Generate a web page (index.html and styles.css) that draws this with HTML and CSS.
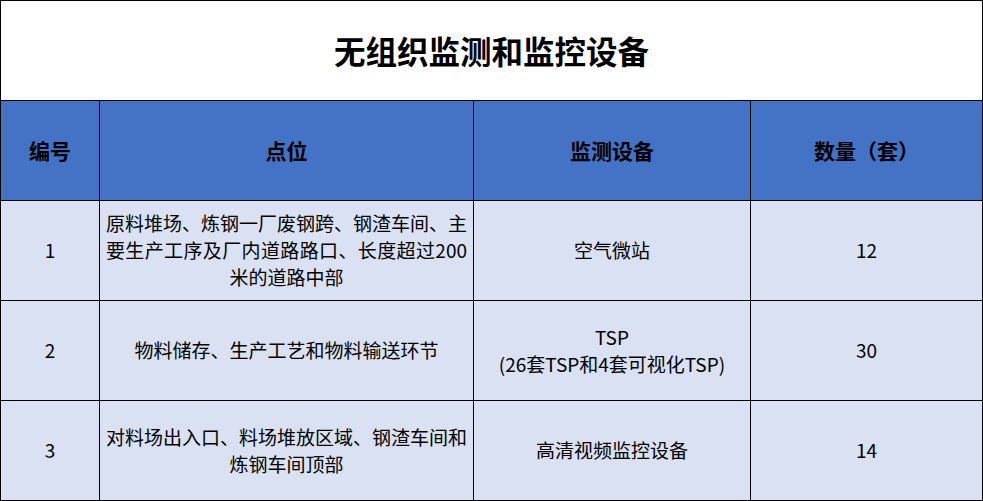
FILE: index.html
```html
<!DOCTYPE html>
<html lang="zh-CN">
<head>
<meta charset="utf-8">
<title>无组织监测和监控设备</title>
<link rel="stylesheet" href="styles.css">
</head>
<body>
<div class="sheet">
  <div class="title">无组织监测和监控设备</div>

  <div class="hd">编号</div>
  <div class="hd">点位</div>
  <div class="hd">监测设备</div>
  <div class="hd">数量（套）</div>

  <div class="cell">1</div>
  <div class="cell text">
    <span class="ln">原料堆场、炼钢一厂废钢跨、钢渣车间、主</span>
    <span class="ln">要生产工序及厂内道路路口、长度超过200</span>
    <span class="ln last">米的道路中部</span>
  </div>
  <div class="cell">空气微站</div>
  <div class="cell">12</div>

  <div class="cell">2</div>
  <div class="cell">物料储存、生产工艺和物料输送环节</div>
  <div class="cell"><span>TSP</span><span>(26套TSP和4套可视化TSP)</span></div>
  <div class="cell">30</div>

  <div class="cell">3</div>
  <div class="cell text">
    <span class="ln">对料场出入口、料场堆放区域、钢渣车间和</span>
    <span class="ln last">炼钢车间顶部</span>
  </div>
  <div class="cell">高清视频监控设备</div>
  <div class="cell">14</div>
</div>
</body>
</html>
```

FILE: styles.css
```css
html, body {
  margin: 0;
  padding: 0;
  background: #ffffff;
}

body {
  font-family: "Noto Sans CJK SC", "Noto Sans", sans-serif;
  color: #000000;
}

.sheet {
  display: grid;
  grid-template-columns: 98px 373px 276px 231px;
  grid-template-rows: 99px 99px 99px 99px 99px;
  gap: 1px;
  padding: 1px;
  background: #000000;
  width: 983px;
  box-sizing: border-box;
}

.title {
  grid-column: 1 / -1;
  background: #ffffff;
  display: flex;
  align-items: center;
  justify-content: center;
  font-size: 31.5px;
  font-weight: 700;
  padding-bottom: 2px;
}

.hd {
  background: #4472c4;
  display: flex;
  align-items: center;
  justify-content: center;
  font-size: 21px;
  font-weight: 700;
  padding-bottom: 2px;
}

.cell {
  background: #d9e1f2;
  display: flex;
  flex-direction: column;
  align-items: center;
  justify-content: center;
  text-align: center;
  font-size: 19px;
  line-height: 27px;
  padding-bottom: 2px;
}

.cell.text {
  align-items: stretch;
  padding: 0 6px 2px;
}

.ln {
  display: block;
  text-align: justify;
  text-align-last: justify;
}

.ln.last {
  text-align: center;
  text-align-last: center;
}
```
